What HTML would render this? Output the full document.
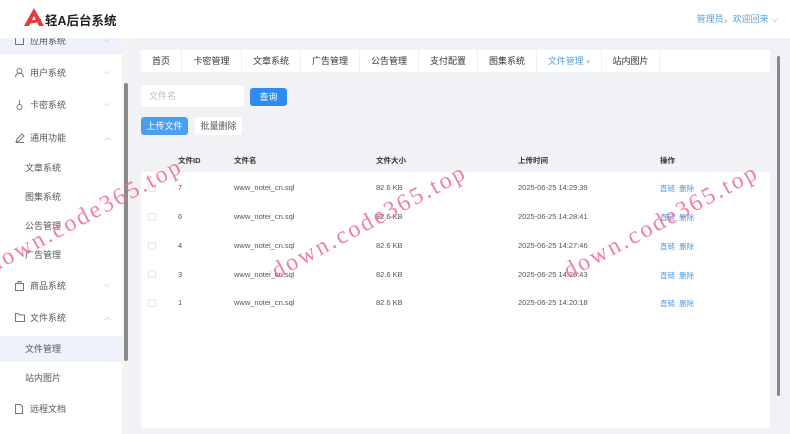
<!DOCTYPE html>
<html><head><meta charset="utf-8"><style>
*{margin:0;padding:0;box-sizing:border-box}
body{width:790px;height:434px;overflow:hidden;background:#f0f2f5;font-family:"Liberation Sans","Noto Sans CJK SC",sans-serif;font-size:9px;color:#333;position:relative}
.hdr{position:absolute;left:0;top:0;width:790px;height:38px;background:#fff}
.logo{position:absolute;left:24px;top:8px}
.title{position:absolute;left:45px;top:10px;font-size:12.5px;font-weight:bold;color:#222}
.user{position:absolute;right:12px;top:12px;font-size:9px;color:#5a9fd6}
.side{position:absolute;left:0;top:38px;width:122px;height:396px;background:#fff;overflow:hidden}
.sb{position:absolute;left:122px;top:38px;width:7px;height:396px;background:#f4f4f4}
.sb i{position:absolute;left:2px;top:45px;width:4px;height:278px;background:#8a8a8a;border-radius:2px}
.mi{position:absolute;left:0;width:122px;height:26px;line-height:26px;color:#555;font-size:9px}
.mi .t{position:absolute;left:30px}
.mi .s{position:absolute;left:25px}
.mi .a{position:absolute;left:104px;color:#aaa;font-size:7px}
.mi svg{position:absolute;left:15px;top:8px}
.on{background:#eef3fb}
.tabs{position:absolute;left:141px;top:50px;width:629px;height:22px;background:#fff}
.tab{position:absolute;top:0;height:22px;line-height:22px;font-size:9px;color:#333;border-right:1px solid #f0f0f0;text-align:center}
.inp{position:absolute;left:141px;top:85px;width:103px;height:22px;background:#fff;color:#bbb;line-height:22px;padding-left:8px;border-radius:2px}
.btn{position:absolute;height:18px;line-height:18px;text-align:center;border-radius:3px;font-size:9px}
.panel{position:absolute;left:141px;top:172px;width:629px;height:256px;background:#fff}
.th{position:absolute;top:155px;font-weight:bold;font-size:7.5px;color:#333}
.cell{position:absolute;font-size:7.5px;color:#555}
.cb{position:absolute;left:148px;width:8px;height:8px;border:1px solid #e4e4e4;border-radius:2px;background:#fff}
.lk{position:absolute;font-size:7.5px;color:#4a9ae0}
.rsb{position:absolute;left:776px;top:46px;width:6px;height:380px}
.rsb i{position:absolute;left:1px;top:10px;width:3px;height:340px;background:#888;border-radius:2px}
.wm{position:absolute;font-family:"Liberation Serif",serif;font-size:24px;color:#f06b8e;letter-spacing:2.5px;transform:rotate(-28deg);transform-origin:left bottom;white-space:nowrap;opacity:.85}
</style></head><body>
<div class="hdr">
<svg class="logo" width="20" height="18" viewBox="0 0 20 18"><path d="M10 0 L20 18 L15 18 L10 8 L5 18 L0 18 Z" fill="#e8383d"/><path d="M3 13 L17 11 L17 14 L3 16Z" fill="#e8383d"/></svg>
<div class="title">轻A后台系统</div>
<div class="user">管理员，欢迎回来 ⌵</div>
</div>
<div class="side">
<div class="mi on" style="top:-10px"><svg width="9" height="9"><rect x=".5" y=".5" width="8" height="8" fill="none" stroke="#777"/></svg><span class="t">应用系统</span><span class="a">⌵</span></div>
<div class="mi" style="top:22px"><svg width="9" height="9"><circle cx="4.5" cy="3" r="2.5" fill="none" stroke="#777"/><path d="M.5 9a4 4 0 0 1 8 0" fill="none" stroke="#777"/></svg><span class="t">用户系统</span><span class="a">⌵</span></div>
<div class="mi" style="top:54px"><svg width="9" height="10"><circle cx="4.5" cy="7" r="2.5" fill="none" stroke="#777"/><path d="M4.5 0v4" stroke="#777"/></svg><span class="t">卡密系统</span><span class="a">⌵</span></div>
<div class="mi" style="top:87px"><svg width="10" height="10"><path d="M1 9l1-3 5-5 2 2-5 5z M1 9.5h8" fill="none" stroke="#777"/></svg><span class="t">通用功能</span><span class="a">︿</span></div>
<div class="mi" style="top:117px"><span class="s">文章系统</span></div>
<div class="mi" style="top:146px"><span class="s">图集系统</span></div>
<div class="mi" style="top:175px"><span class="s">公告管理</span></div>
<div class="mi" style="top:204px"><span class="s">广告管理</span></div>
<div class="mi" style="top:235px"><svg width="9" height="10"><rect x=".5" y="2.5" width="8" height="7" fill="none" stroke="#777"/><path d="M3 2.5v-2h3v2" fill="none" stroke="#777"/></svg><span class="t">商品系统</span><span class="a">⌵</span></div>
<div class="mi" style="top:267px"><svg width="10" height="9"><path d="M.5 .5h3l1 1.5h5v6.5h-9z" fill="none" stroke="#777"/></svg><span class="t">文件系统</span><span class="a">︿</span></div>
<div class="mi on" style="top:298px"><span class="s">文件管理</span></div>
<div class="mi" style="top:327px"><span class="s">站内图片</span></div>
<div class="mi" style="top:358px"><svg width="8" height="10"><path d="M.5 .5h5l2 2v7h-7z" fill="none" stroke="#777"/></svg><span class="t">远程文档</span></div>
</div>
<div class="sb"><i></i></div>
<div class="tabs">
<div class="tab" style="left:0;width:41px">首页</div>
<div class="tab" style="left:41px;width:60px">卡密管理</div>
<div class="tab" style="left:101px;width:59px">文章系统</div>
<div class="tab" style="left:160px;width:59px">广告管理</div>
<div class="tab" style="left:219px;width:59px">公告管理</div>
<div class="tab" style="left:278px;width:59px">支付配置</div>
<div class="tab" style="left:337px;width:59px">图集系统</div>
<div class="tab" style="left:396px;width:65px;color:#5a9fd6">文件管理 <span style="color:#999;font-size:7px">×</span></div>
<div class="tab" style="left:461px;width:58px">站内图片</div>
</div>
<div class="inp">文件名</div>
<div class="btn" style="left:250px;top:88px;width:37px;background:#2d8cf0;color:#fff">查询</div>
<div class="btn" style="left:141px;top:117px;width:47px;background:#4a9ff0;color:#fff">上传文件</div>
<div class="btn" style="left:195px;top:117px;width:47px;background:#fff;color:#555">批量删除</div>
<div class="panel"></div>
<div class="cb" style="top:156px;border-color:#eee;background:#f5f5f5"></div>
<div class="th" style="left:178px">文件ID</div>
<div class="th" style="left:234px">文件名</div>
<div class="th" style="left:376px">文件大小</div>
<div class="th" style="left:518px">上传时间</div>
<div class="th" style="left:660px">操作</div>

<div class="cb" style="top:184px"></div><div class="cell" style="left:178px;top:183px">7</div><div class="cell" style="left:234px;top:183px">www_notei_cn.sql</div><div class="cell" style="left:376px;top:183px">82.6 KB</div><div class="cell" style="left:518px;top:183px">2025-06-25 14:29:39</div><div class="lk" style="left:660px;top:183px">直链 &nbsp;删除</div>
<div class="cb" style="top:213px"></div><div class="cell" style="left:178px;top:212px">6</div><div class="cell" style="left:234px;top:212px">www_notei_cn.sql</div><div class="cell" style="left:376px;top:212px">82.6 KB</div><div class="cell" style="left:518px;top:212px">2025-06-25 14:28:41</div><div class="lk" style="left:660px;top:212px">直链 &nbsp;删除</div>
<div class="cb" style="top:242px"></div><div class="cell" style="left:178px;top:241px">4</div><div class="cell" style="left:234px;top:241px">www_notei_cn.sql</div><div class="cell" style="left:376px;top:241px">82.6 KB</div><div class="cell" style="left:518px;top:241px">2025-06-25 14:27:46</div><div class="lk" style="left:660px;top:241px">直链 &nbsp;删除</div>
<div class="cb" style="top:270px"></div><div class="cell" style="left:178px;top:270px">3</div><div class="cell" style="left:234px;top:270px">www_notei_cn.sql</div><div class="cell" style="left:376px;top:270px">82.6 KB</div><div class="cell" style="left:518px;top:270px">2025-06-25 14:26:43</div><div class="lk" style="left:660px;top:270px">直链 &nbsp;删除</div>
<div class="cb" style="top:299px"></div><div class="cell" style="left:178px;top:298px">1</div><div class="cell" style="left:234px;top:298px">www_notei_cn.sql</div><div class="cell" style="left:376px;top:298px">82.6 KB</div><div class="cell" style="left:518px;top:298px">2025-06-25 14:20:18</div><div class="lk" style="left:660px;top:298px">直链 &nbsp;删除</div>

<div class="rsb"><i></i></div>
<div class="wm" style="left:-4px;top:252px">down.code365.top</div>
<div class="wm" style="left:280px;top:258px">down.code365.top</div>
<div class="wm" style="left:572px;top:258px">down.code365.top</div>
</body></html>
